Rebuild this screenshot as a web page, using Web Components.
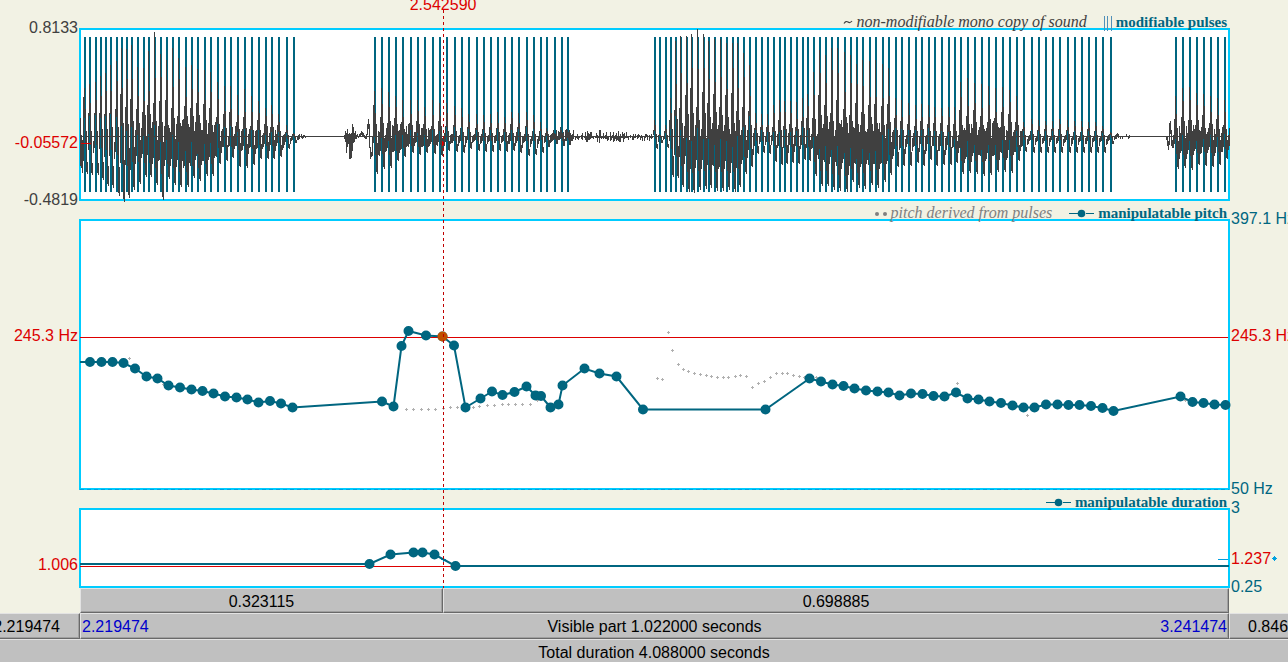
<!DOCTYPE html>
<html lang="en">
<head>
<meta charset="utf-8">
<title>Manipulation editor</title>
<style>
  body { margin: 0; background: #f2f2e4; }
</style>
</head>
<body>
<manipulation-editor></manipulation-editor>

<template id="panel-template">
  <style>
    :host { display: grid; grid-template-columns: 80px minmax(0, 1fr) 59px; grid-template-rows: var(--legend-height, 18px) var(--plot-height); }
    .legend { grid-area: 1 / 2; display: flex; justify-content: flex-end; align-items: flex-end; position: relative; z-index: 2; padding-right: 2px; gap: 17px; }
    .plot { grid-area: 2 / 2; margin: 0 -1px; border: 2px solid #00ccff; background: #fff; position: relative; min-width: 0; }
    .left, .right { display: grid; margin: -9px 0 -8px; min-width: 0; white-space: nowrap; }
    .left { grid-area: 2 / 1; padding-right: 2px; }
    .right { grid-area: 2 / 3; padding-left: 2px; }
  </style>
  <div class="legend"><slot name="legend"></slot></div>
  <div class="left"><slot name="left"></slot></div>
  <div class="plot"><slot></slot></div>
  <div class="right"><slot name="right"></slot></div>
</template>

<template id="axis-template">
  <style>
    :host { display: flex; flex-direction: column; font: 16px/18px "Liberation Sans", Arial, sans-serif; }
    :host([side="left"]) { align-items: flex-end; }
    ::slotted(*) { display: block; }
  </style>
  <slot></slot>
</template>

<template id="legend-template">
  <style>
    :host { display: flex; align-items: center; gap: 4px; white-space: nowrap; color: #006680; font: bold 15px/12px "Liberation Serif", "Times New Roman", serif; }
    :host([kind="note"]), :host([kind="sound"]) { color: #808080; font-size: 16px; font-weight: normal; font-style: italic; }
    :host([kind="sound"]) { color: #404040; }
    svg { display: block; overflow: visible; }
  </style>
  <span class="mark"></span><span><slot></slot></span>
</template>

<template id="graph-template">
  <style>
    :host { display: block; height: 100%; }
    svg { display: block; width: 100%; height: 100%; overflow: visible; }
    path, line, polyline { vector-effect: non-scaling-stroke; fill: none; }
    .crisp { shape-rendering: crispEdges; }
    .pulse { stroke: #006680; stroke-width: 2; }
    .wave { stroke: #404040; }
    .curve { stroke: #006680; stroke-width: 2; }
    .dots { stroke: #006680; stroke-width: 10; stroke-linecap: round; }
    .picked { stroke: #c05000; stroke-width: 10; stroke-linecap: round; }
    .derived { stroke: #b0b0b0; }
    .red { stroke: #dd0000; }
    .blue { stroke: #00a0e0; }
  </style>
  <svg preserveAspectRatio="none" aria-hidden="true"></svg>
</template>

<template id="bar-template">
  <style>
    :host { display: block; min-width: 0; }
    button { display: flex; align-items: center; justify-content: center; width: 100%; height: 100%; margin: 0; padding: 2px 2px 0; overflow: hidden; white-space: nowrap; border: 1px solid; border-color: #e3e3e3 #696969 #696969 #e3e3e3; border-radius: 0; background: #c0c0c0; box-shadow: inset -1px -1px #a0a0a0; color: #000; font: 16px/18px "Liberation Sans", Arial, sans-serif; }
    :host([align="end"]) button { justify-content: flex-end; padding-right: 19px; }
    :host([align="start"]) button { justify-content: flex-start; padding-left: 18px; }
    :host([total]) button { padding-left: 22px; }
    :host([split]) button { justify-content: space-between; padding: 2px 1px 0; }
    ::slotted(.edge) { color: #0000cc; }
  </style>
  <button type="button"><slot></slot></button>
</template>

<template id="editor-template">
  <style>
    :host { display: block; overflow: hidden; position: relative; min-height: 100vh; }
    .plots { position: relative; }
    .sound { --legend-height: 28px; --plot-height: 173px; }
    .pitch { --plot-height: 271px; }
    .duration { --plot-height: 80px; }
    .cursor { position: absolute; inset: 0 59px 0 80px; pointer-events: none; z-index: 3; }
    .cursor div { position: absolute; left: 31.6%; top: 10px; bottom: 0; width: 1px; background: repeating-linear-gradient(#c00000 0 3px, transparent 3px 6px); }
    .cursor output { position: absolute; left: 31.6%; top: -4px; transform: translateX(-50%); color: #dd0000; font: 16px/18px "Liberation Sans", Arial, sans-serif; }
    .grey { color: #404040; } .red { color: #dd0000; } .teal { color: #006680; }
    .reading { display: flex; align-items: center; gap: 1px; }
    .selection { display: grid; grid-template-columns: 363fr 786fr; height: 25px; margin: 0 59px 0 80px; }
    .visible { display: grid; grid-template-columns: 82px minmax(0, 1fr) 61px; height: 26px; margin: 0 -2px; }
    .whole { height: 26px; margin: 0 -2px; }
  </style>
  <div class="plots">
    <plot-panel class="sound">
      <legend-item slot="legend" kind="sound" mark="tilde">non-modifiable mono copy of sound</legend-item>
      <legend-item slot="legend" mark="pulses">modifiable pulses</legend-item>
      <value-axis slot="left" side="left">
        <span class="grey">0.8133</span><i style="flex:96"></i><span class="red">-0.05572</span><i style="flex:39"></i><span class="grey">-0.4819</span>
      </value-axis>
      <plot-graph kind="sound"></plot-graph>
    </plot-panel>
    <plot-panel class="pitch">
      <legend-item slot="legend" kind="note" mark="dots">pitch derived from pulses</legend-item>
      <legend-item slot="legend" mark="point">manipulatable pitch</legend-item>
      <value-axis slot="left" side="left">
        <i style="flex:117"></i><span class="red">245.3 Hz</span><i style="flex:152"></i>
      </value-axis>
      <plot-graph kind="pitch"></plot-graph>
      <value-axis slot="right">
        <span class="teal">397.1 Hz</span><i style="flex:99"></i><span class="red">245.3 Hz</span><i style="flex:134"></i><span class="teal">50 Hz</span>
      </value-axis>
    </plot-panel>
    <plot-panel class="duration">
      <legend-item slot="legend" mark="point">manipulatable duration</legend-item>
      <value-axis slot="left" side="left">
        <i style="flex:57"></i><span class="red">1.006</span><i style="flex:22"></i>
      </value-axis>
      <plot-graph kind="duration"></plot-graph>
      <value-axis slot="right">
        <span class="teal">3</span><i style="flex:32"></i>
        <span class="red reading" style="display:flex">1.237<svg width="5" height="5" aria-hidden="true"><path d="M2 0h1v1h1v1h1v1h-1v1h-1v1h-1v-1h-1v-1h-1v-1h1v-1h1z" fill="#00a0e0"/></svg></span>
        <i style="flex:10"></i><span class="teal">0.25</span>
      </value-axis>
    </plot-panel>
    <div class="cursor"><div></div><output>2.542590</output></div>
  </div>
  <div class="selection"><time-bar>0.323115</time-bar><time-bar>0.698885</time-bar></div>
  <div class="visible">
    <time-bar align="end">2.219474</time-bar>
    <time-bar split><span class="edge">2.219474</span><span>Visible part 1.022000 seconds</span><span class="edge">3.241474</span></time-bar>
    <time-bar align="start">0.846526</time-bar>
  </div>
  <time-bar class="whole" total>Total duration 4.088000 seconds</time-bar>
</template>

<script>
  class TemplateElement extends HTMLElement {
    constructor() {
      super();
      this.attachShadow({ mode: "open" }).append(
        document.getElementById(this.constructor.template).content.cloneNode(true));
    }
  }

  class PlotPanel extends TemplateElement { static template = "panel-template"; }
  class ValueAxis extends TemplateElement { static template = "axis-template"; }
  class TimeBar extends TemplateElement { static template = "bar-template"; }
  class ManipulationEditor extends TemplateElement { static template = "editor-template"; }

  const MARKS = {
    tilde: '<svg width="10" height="12"><path d="M1 7.500q2-3 4-1.500t4-1" fill="none" stroke="#404040" stroke-width="1.200"/></svg>',
    pulses: '<svg width="8" height="12"><path d="M.5 0v15M3.500 0v15M7.500 0v15" stroke="#5090b8"/></svg>',
    dots: '<svg width="12" height="12"><circle cx="2" cy="7" r="2" fill="#808080"/><circle cx="10" cy="7" r="2" fill="#808080"/></svg>',
    point: '<svg width="25" height="12"><path d="M0 6.500h9M17 6.500h8" stroke="#006680"/><circle cx="12.500" cy="6.500" r="3.800" fill="#006680"/></svg>'
  };
  class LegendItem extends TemplateElement {
    static template = "legend-template";
    connectedCallback() {
      this.shadowRoot.querySelector(".mark").innerHTML = MARKS[this.getAttribute("mark")];
    }
  }

  /* Glottal pulses: x, crest, trough, and ringing between pulses (0-9). */
  const PULSES = `85 88 173 0,90 84 174 0,96 82 174 0,101 76 179 1,106 73 185 1,111 65 187 1,117 61 195 2,122 48 201 4,127 49 197 5,132 45 189 5,138 67 183 6,144 68 176 8,149 51 176 8,155 32 184 8,161 54 199 7,167 60 178 8,173 48 184 8,179 58 186 9,186 67 186 9,192 65 177 9,198 69 180 9,205 70 175 9,211 72 175 9,218 82 163 4,225 86 160 4,231 86 157 5,238 95 166 4,245 89 167 4,252 96 164 4,259 101 158 3,266 108 158 4,272 105 158 4,279 114 156 2,287 125 148 0,294 133 142 0;
375 91 173 5,382 88 168 6,389 92 167 7,396 96 160 7,403 100 156 6,411 100 152 6,418 100 154 6,425 107 152 6,433 100 153 5,440 103 155 4,447 103 150 2,455 106 151 1,462 108 152 1,469 114 148 1,477 114 150 1,484 115 151 1,491 114 151 1,498 112 150 1,505 117 151 2,512 112 150 2,519 113 152 1,527 112 155 0,534 115 154 0,541 122 152 0,547 128 146 2,555 133 143 4,562 130 145 4,568 130 144 4;
655 120 148 0,660 134 142 0,666 125 147 0,671 98 176 2,676 41 177 5,681 36 186 7,687 36 191 8,692 34 192 8,698 29 189 8,704 34 188 8,709 41 187 8,715 39 190 8,721 39 190 8,727 43 189 8,733 43 191 8,738 43 186 8,744 53 173 6,750 65 166 3,756 113 153 1,762 114 152 1,768 114 153 2,774 105 161 3,780 100 164 3,785 101 163 3,791 101 162 3,797 102 163 3,803 98 159 3,808 94 160 4,814 72 175 8,820 50 185 9,826 55 185 9,832 48 189 9,838 48 190 9,845 52 191 9,851 55 181 9,857 64 187 9,863 60 188 9,870 61 184 9,876 60 187 8,883 64 181 7,889 68 174 5,896 98 166 2,902 100 165 2,909 103 165 2,916 105 162 2,922 104 165 2,929 105 159 2,935 107 165 2,942 108 164 2,949 107 164 3,955 107 162 5,961 82 173 8,968 78 172 8,975 83 173 8,982 84 175 8,989 86 174 8,996 88 171 8,1003 87 171 7,1010 90 172 6,1017 96 160 4,1024 122 151 0,1032 119 152 0,1039 120 152 0,1046 121 152 0,1053 121 152 0,1060 119 152 0,1068 120 152 0,1075 121 152 0,1082 121 152 0,1089 122 152 0,1096 122 152 0,1103 126 152 0,1111 132 143 0;
1176 96 168 6,1183 88 167 7,1190 87 169 7,1197 93 164 7,1204 94 165 6,1211 96 166 6,1218 98 164 6,1225 100 158 6`
    .split(";").map(run => run.split(",").map(p => p.trim().split(" ").map(Number)));
  const ZERO = 136;

  function waveform() {
    const cols = new Map();
    const put = (x, top, bottom) => {
      const old = cols.get(x) || [999, 0];
      cols.set(x, [Math.min(old[0], Math.round(top)), Math.max(old[1], Math.round(bottom))]);
    };
    let seed = 7;
    const rnd = () => (seed = seed * 16807 % 2147483647) / 2147483647;
    for (const run of PULSES) run.forEach(([x, crest, trough, ring], i) => {
      const next = run[i + 1] ? run[i + 1][0] : x + 7;
      const up = ZERO - crest, down = trough - ZERO, r = ring / 9, start = x - 1;
      put(start - 1, ZERO - up * (.25 + .25 * rnd()), ZERO - up * .1 + r * down * .5);
      put(start, crest, ZERO - up * .4 + r * down * (.7 + .3 * rnd()));
      put(start + 1, ZERO - up * (.5 + .25 * rnd()), ZERO + down * (.2 + .5 * r));
      put(start + 2, ZERO - up * .1 - r * (4 + 12 * rnd()), ZERO + down * .95);
      put(start + 3, ZERO + down * .7 * (1 - r) - r * 14 * rnd(), trough);
      for (let k = 4; k < next - x; k++) {
        const t = (k - 3) / (next - x - 3);
        const low = down * (.8 - .7 * t * (1 - r * .6));
        put(start + k, ZERO + low * .4 * (1 - r) * (1 - t) - r * (2 + 15 * rnd()) - t * 3, ZERO + Math.max(2, low * (.65 + .35 * rnd())));
      }
    });
    /* breath noise, stop bursts and the onsets ahead of voiced stretches */
    for (let x = 569; x < 653; x++) {
      const a = 2 + 2 * Math.exp(-(((x - 603) / 24) ** 2));
      put(x, ZERO + 1 - a * (.2 + 1.6 * rnd() ** 2), ZERO + a * (.1 + 1.7 * rnd() ** 2));
    }
    const burst = [344,135,138,345,131,141,346,133,152,347,129,146,348,134,143,349,133,158,350,134,158,351,133,157,352,124,150,353,127,142,354,133,141,355,131,138,356,135,138,357,134,136,358,136,137,359,134,136,360,133,135,361,131,134,362,132,135,363,133,136,364,135,137,365,136,138,366,134,138,367,124,134,368,119,128,369,124,147,370,147,158,371,152,156,372,136,155,373,105,137,301,134,137,302,136,138,303,135,137,304,135,136,305,136,137,1117,133,136,1118,134,137,1120,136,138,1122,136,138,1126,134,136,1128,136,138,1129,135,137,1166,136,139,1167,137,145,1168,141,149,1169,123,144,1170,121,133,1171,130,145,1172,140,147,1173,135,147,1174,119,137,80,118,165,81,135,167,82,140,172,83,97,160];
    for (let i = 0; i < burst.length; i += 3) put(burst[i], burst[i + 1], burst[i + 2]);
    return [...cols].filter(([x]) => x < 1230).map(([x, [t, b]]) => `M${x + .5} ${t}V${b + 1}`).join("");
  }

  const PITCH = "90 362,101.5 362,112.5 362,123.5 363,135 368.5,146.5 376.5,157.5 378.5,168.5 385.5,180 387.5,191.5 389.5,202.5 391,213.5 393.5,225 396.5,236.5 397.5,247.5 399.5,258.5 402.5,270 401,281 403.5,292.5 407.5,382 401.5,393.5 406.5,401.5 346,408.5 331,426 335.5,442.5 336.5,454 345.5,465.5 407.5,480.5 398.5,492 391.5,502.5 395,514.5 392,526.5 386.5,535.5 395.5,541 396,550.5 407.5,558.5 404.5,562.5 385.5,584.5 368.5,599.5 373.5,616.5 376.5,643 409.5,765.5 409.5,809.5 378.5,821 381.5,832.5 384.5,843.5 386,854.5 388.5,866 390.5,877.5 391.5,888.5 392.5,899.5 395.5,911 393.5,922.5 394,933.5 396,944.5 396.5,956 392.5,967.5 398.5,978.5 399.5,989.5 401.5,1001 403,1012.5 405.5,1023.5 407.5,1034.5 407.5,1046 404.5,1057.5 404.5,1068.5 405,1079.5 405,1091 406,1102.5 408,1113.5 411,1180.5 396.5,1192.5 402,1203.5 403,1214.5 404.5,1225.5 405";
  const DERIVED = "129 358,163 384,406 409,413 409,421 409,428 409,435 409,443 408,450 407,457 407,473 407,479 406,487 405,494 405,502 404,508 404,515 404,522 404,530 404,537 400,657 378,662 379,668 332,672 350,678 364,683 369,688 371,694 373,700 374,706 375,711 376,717 377,723 377,728 377,735 376,740 375,746 376,752 387,758 383,764 381,770 377,776 373,782 373,787 373,793 375,799 376,804 377,816 377,957 383,1027 415,1185 400";
  const DURATION = "369.5 564,390.5 554.5,413.5 552.5,422.5 552.5,434.5 554.5,455.5 566";
  const dots = list => list.split(",").map(p => `M${p}h.01`).join("");

  const GRAPHS = {
    sound: () => ["81 30 1147 169",
      `<path class="crisp wave" d="M80 136.5H1229"/>
       <path class="crisp pulse" d="${PULSES.flat().map(p => `M${p[0]} 37V192`).join("")}"/>
       <path class="crisp wave" stroke-dasharray="3 3" d="M80 136.5H1229"/>
       <path class="crisp wave" d="${waveform()}"/>
       <path class="crisp red" d="M81 143.5H91M442.5 141V146"/>`],
    pitch: () => ["81 221 1147 267",
      `<path class="crisp red" d="M80 337.5H1228"/>
       <path class="crisp blue" stroke-dasharray="4 3" d="M80 489.5H1229"/>
       <path class="crisp derived" d="${DERIVED.split(",").map(p => { const [x, y] = p.split(" ").map(Number); return `M${x - 1} ${y + .5}h3M${x + .5} ${y - 1}v3`; }).join("")}"/>
       <polyline class="curve" points="80 362,${PITCH},1229 405"/>
       <path class="dots" d="${dots(PITCH)}"/>
       <path class="picked" d="M442.5 336.5h.01"/>`],
    duration: () => ["81 510 1147 76",
      `<path class="crisp red" d="M80 566.5H1228"/>
       <path class="crisp blue" d="M1218 559.5H1228M441 559.5h5M443.5 557v5"/>
       <polyline class="curve" points="80 564,${DURATION},1229 566"/>
       <path class="dots" d="${dots(DURATION)}"/>`]
  };
  class PlotGraph extends TemplateElement {
    static template = "graph-template";
    connectedCallback() {
      const [box, marks] = GRAPHS[this.getAttribute("kind")]();
      const svg = this.shadowRoot.querySelector("svg");
      svg.setAttribute("viewBox", box);
      svg.innerHTML = marks;
    }
  }

  customElements.define("plot-panel", PlotPanel);
  customElements.define("value-axis", ValueAxis);
  customElements.define("legend-item", LegendItem);
  customElements.define("plot-graph", PlotGraph);
  customElements.define("time-bar", TimeBar);
  customElements.define("manipulation-editor", ManipulationEditor);
</script>
</body>
</html>
